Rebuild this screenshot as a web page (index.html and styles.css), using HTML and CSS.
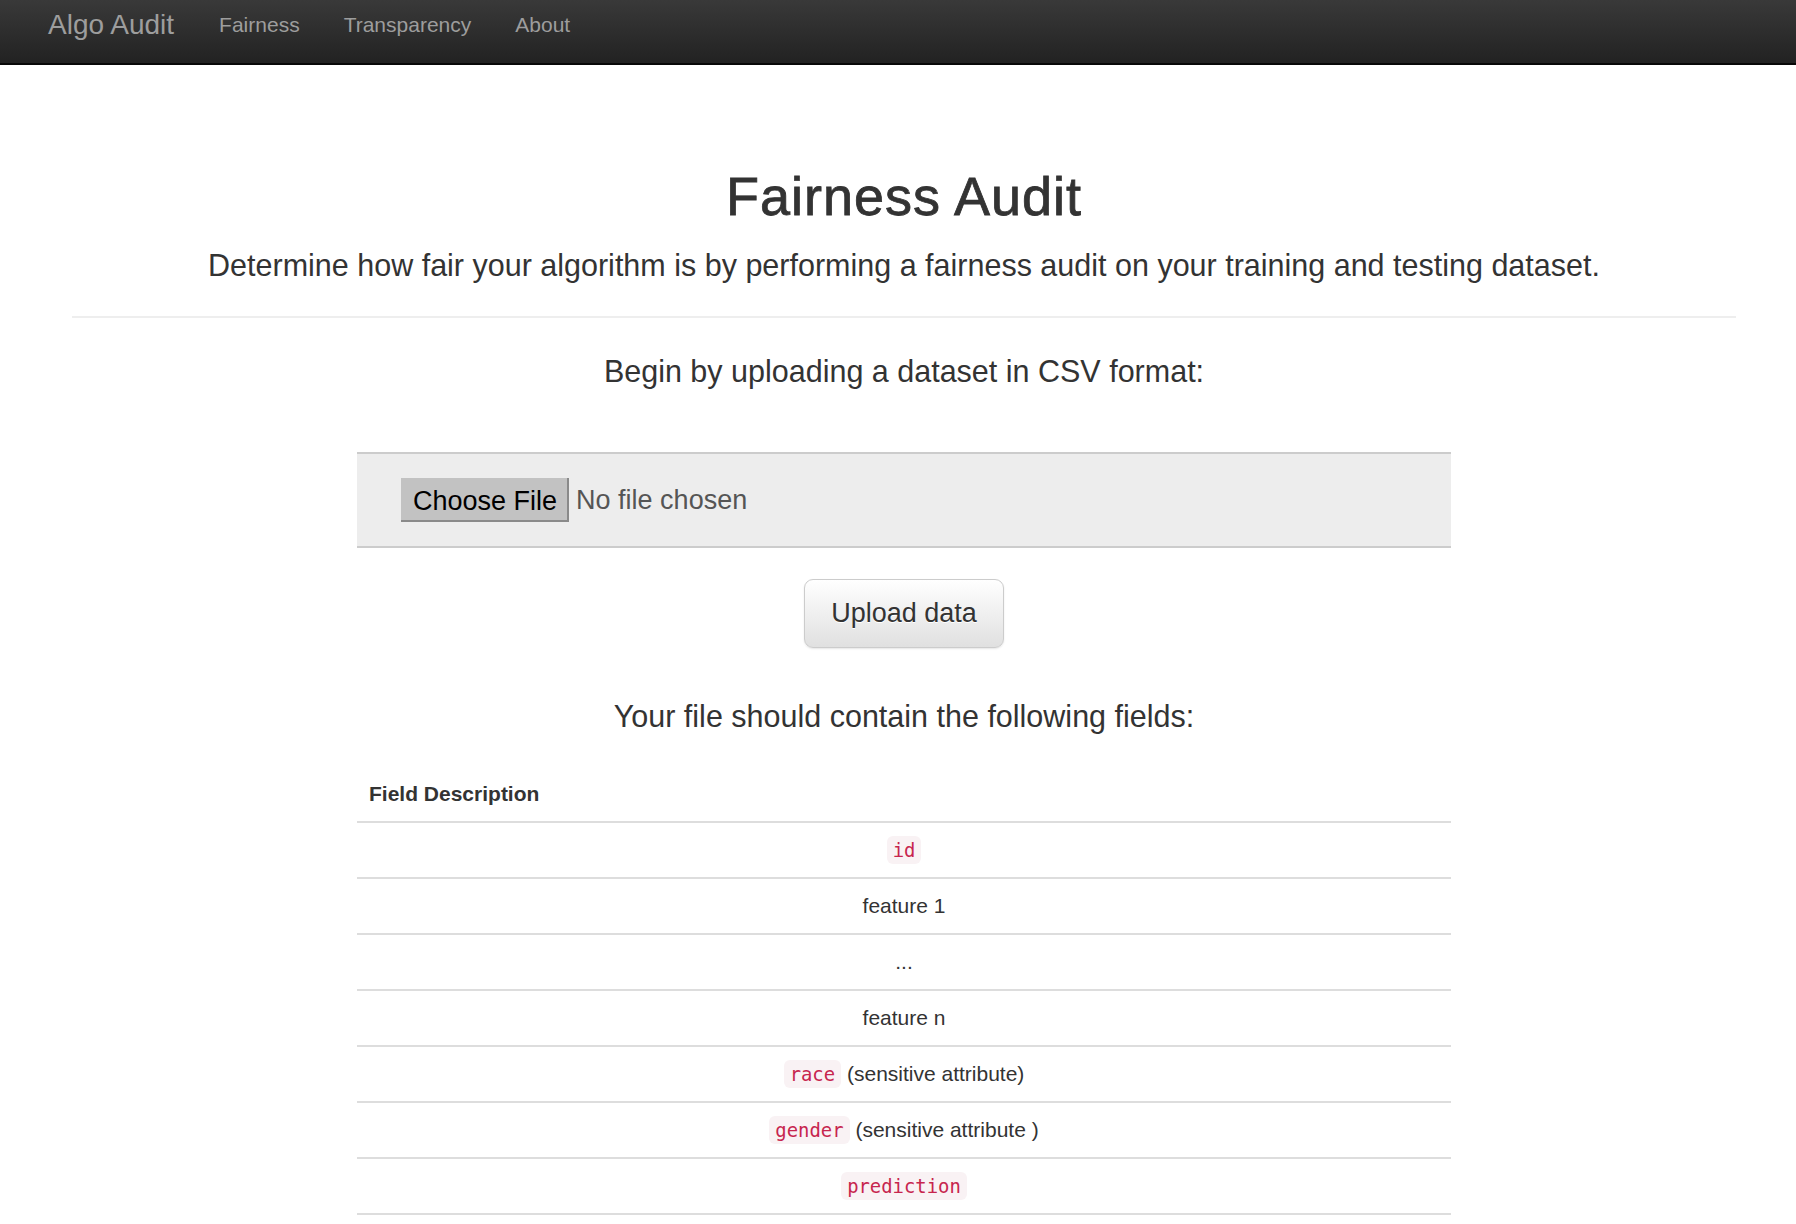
FILE: index.html
```html
<!DOCTYPE html>
<html lang="en">
<head>
<meta charset="utf-8">
<title>Fairness Audit</title>
<link rel="stylesheet" href="styles.css">
</head>
<body>
<nav class="navbar">
  <div class="nav-inner">
    <a class="brand" href="#">Algo Audit</a>
    <ul class="nav-links">
      <li><a href="#">Fairness</a></li>
      <li><a href="#">Transparency</a></li>
      <li><a href="#">About</a></li>
    </ul>
  </div>
</nav>
<main class="page">
  <div class="container">
    <header class="intro">
      <h1 class="title">Fairness Audit</h1>
      <p class="lead lead-sub">Determine how fair your algorithm is by performing a fairness audit on your training and testing dataset.</p>
    </header>
    <hr class="divider">
    <section class="upload">
      <p class="lead lead-begin">Begin by uploading a dataset in CSV format:</p>
      <form class="upload-form">
        <div class="file-box">
          <label class="file-field">
            <span class="file-btn">Choose File</span>
            <span class="file-name">No file chosen</span>
          </label>
        </div>
        <div class="btn-row">
          <button type="button" class="btn-upload">Upload data</button>
        </div>
      </form>
      <p class="lead lead-fields">Your file should contain the following fields:</p>
      <table class="fields">
        <thead>
          <tr><th>Field Description</th></tr>
        </thead>
        <tbody>
          <tr><td><code>id</code></td></tr>
          <tr><td>feature 1</td></tr>
          <tr><td>...</td></tr>
          <tr><td>feature n</td></tr>
          <tr><td><code>race</code> (sensitive attribute)</td></tr>
          <tr><td><code>gender</code> (sensitive attribute )</td></tr>
          <tr><td><code>prediction</code></td></tr>
        </tbody>
      </table>
    </section>
  </div>
</main>
</body>
</html>
```
FILE: styles.css
```css
* { box-sizing: border-box; }

html, body {
  margin: 0;
  padding: 0;
  background: #fff;
}

body {
  font-family: "Liberation Sans", Arial, sans-serif;
  color: #333;
  font-size: 21px;
}

/* Navbar */
.navbar {
  height: 65px;
  background: linear-gradient(#393939, #222);
  border-bottom: 2px solid #080808;
}

.nav-inner {
  display: flex;
  align-items: flex-start;
  padding: 10px 0 0 48px;
}

.brand {
  font-size: 28px;
  line-height: 30px;
  color: #9d9d9d;
  text-decoration: none;
}

.nav-links {
  display: flex;
  list-style: none;
  margin: 0 0 0 23px;
  padding: 0;
}

.nav-links a {
  display: block;
  padding: 0 22px;
  font-size: 21px;
  line-height: 30px;
  color: #9d9d9d;
  text-decoration: none;
}

/* Page */
.page {
  padding-left: 12px;
}

.container {
  width: 1664px;
  margin: 0 auto;
}

.intro {
  text-align: center;
}

.title {
  margin: 102px 0 0;
  font-size: 54px;
  line-height: 59px;
  font-weight: 500;
  letter-spacing: 1px;
  color: #333;
  -webkit-text-stroke: 0.8px #333;
}

.lead {
  margin: 0;
  font-size: 30.5px;
  line-height: 44px;
  font-weight: 300;
  color: #333;
  text-align: center;
}

.lead-sub {
  margin-top: 17px;
}

.divider {
  margin: 29px 0 0;
  border: 0;
  border-top: 2px solid #eee;
  height: 0;
}

.upload {
  width: 1094px;
  margin: 0 auto;
}

.lead-begin {
  margin-top: 31px;
}

.upload-form {
  margin-top: 59px;
}

.file-box {
  background: #ededed;
  border-top: 2px solid #ccc;
  border-bottom: 2px solid #ccc;
  padding: 24px 44px;
}

.file-field {
  display: flex;
  align-items: center;
}

.file-btn {
  display: inline-flex;
  align-items: center;
  height: 44px;
  padding: 4px 10px 0 12px;
  background: #c2c2c2;
  border-right: 2px solid #8a8a8a;
  border-bottom: 2px solid #8a8a8a;
  color: #000;
  font-size: 27px;
}

.file-name {
  margin-left: 7px;
  font-size: 27px;
  color: #555;
}

.btn-row {
  display: flex;
  justify-content: center;
  margin-top: 31px;
}

.btn-upload {
  font-family: "Liberation Sans", Arial, sans-serif;
  font-size: 27px;
  line-height: 37px;
  padding: 15px 26px;
  color: #333;
  background: linear-gradient(#fff, #e0e0e0);
  border: 1px solid #ccc;
  border-radius: 9px;
  text-shadow: 0 1px 0 #fff;
  box-shadow: inset 0 1px 0 rgba(255,255,255,.15), 0 1px 2px rgba(0,0,0,.1);
}

.lead-fields {
  margin-top: 46px;
}

.fields {
  width: 100%;
  margin-top: 29px;
  border-collapse: collapse;
}

.fields th {
  text-align: left;
  font-weight: bold;
  font-size: 21px;
  line-height: 30px;
  padding: 12px;
  border-bottom: 2px solid #ddd;
}

.fields td {
  text-align: center;
  font-size: 21px;
  line-height: 30px;
  padding: 12px;
  border-bottom: 2px solid #ddd;
}

code {
  font-family: "DejaVu Sans Mono", Menlo, monospace;
  font-size: 18.9px;
  padding: 3px 6px;
  color: #c7254e;
  background: #f9f2f4;
  border-radius: 6px;
}
```
